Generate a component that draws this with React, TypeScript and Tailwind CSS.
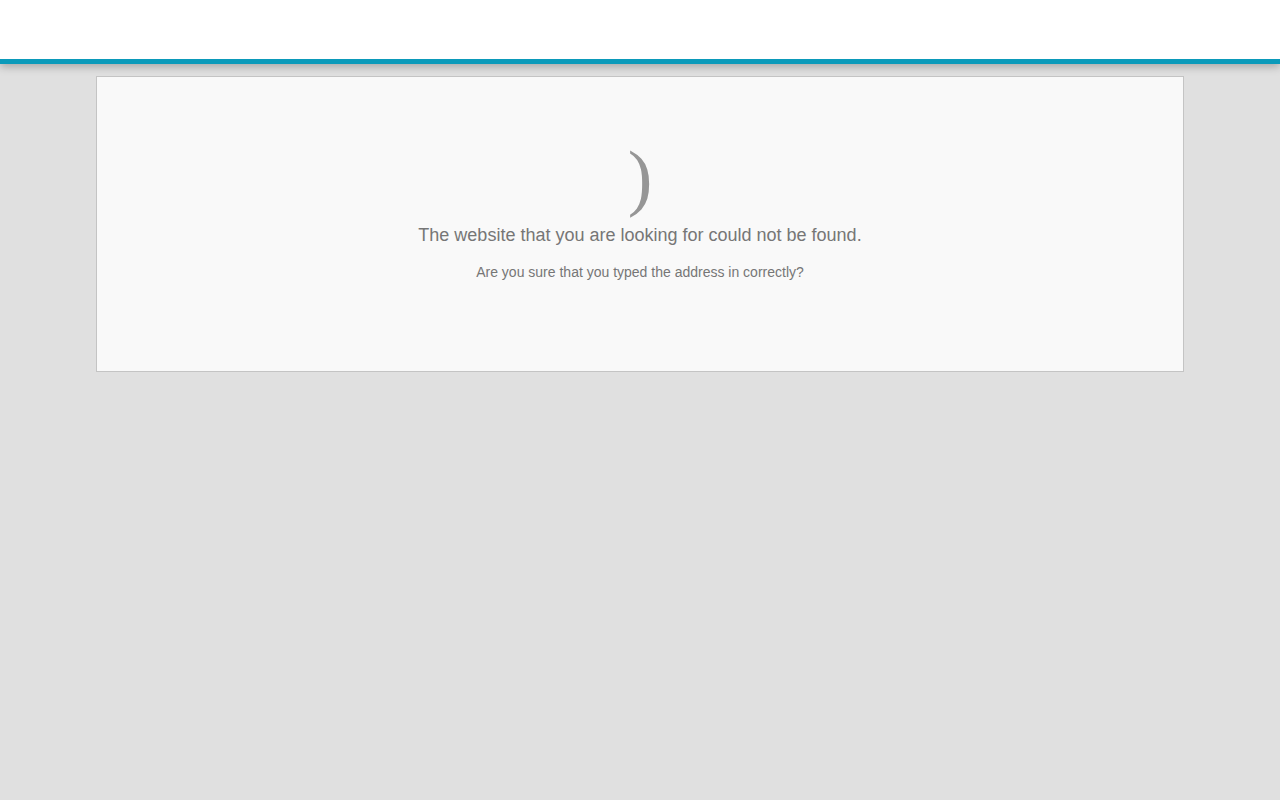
export default function App() {
  return (
    <div className="min-h-[800px] bg-[#e0e0e0]" style={{ fontFamily: '"Liberation Sans", Arial, sans-serif' }}>
      <header className="relative h-[64px] bg-white border-b-[5px] border-[#0b9aba] shadow-[0_3px_8px_rgba(0,0,0,0.25)]" />
      <main className="mx-auto mt-[12px] w-[1088px]">
        <section className="h-[296px] border border-[#c4c4c4] bg-[#f9f9f9] flex flex-col items-center pt-[53px]">
          <div
            className="text-[74px] leading-[94px] text-[#969696] h-[94px]"
            style={{ fontFamily: '"Liberation Serif", "Times New Roman", serif' }}
          >
            )
          </div>
          <h1 className="text-[18px] leading-[22px] text-[#767676] mt-0">
            The website that you are looking for could not be found.
          </h1>
          <p className="mt-[17px] text-[14px] leading-[18px] text-[#767676]">
            Are you sure that you typed the address in correctly?
          </p>
        </section>
      </main>
    </div>
  );
}
